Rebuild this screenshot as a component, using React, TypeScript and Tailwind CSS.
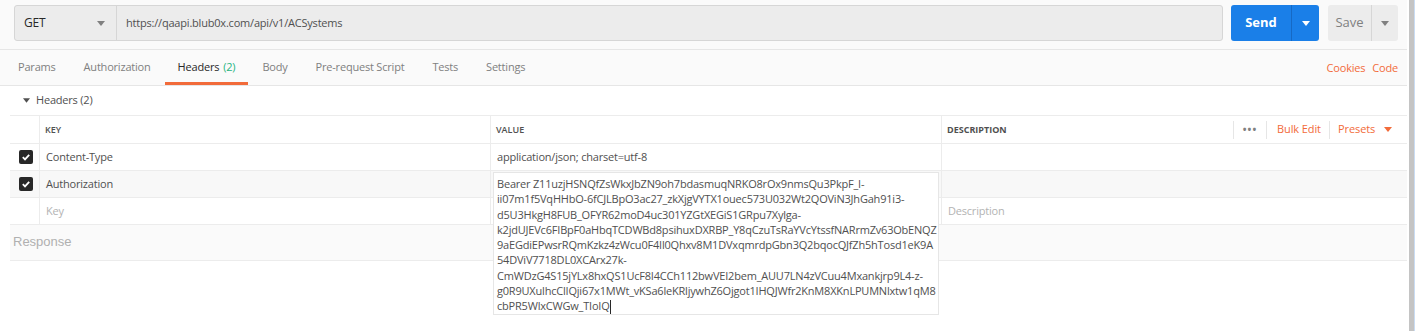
const tokenLines = [
  'Bearer Z11uzjHSNQfZsWkxJbZN9oh7bdasmuqNRKO8rOx9nmsQu3PkpF_I-',
  'ii07m1f5VqHHbO-6fCJLBpO3ac27_zkXjgVYTX1ouec573U032Wt2QOViN3JhGah91i3-',
  'd5U3HkgH8FUB_OFYR62moD4uc301YZGtXEGiS1GRpu7Xylga-',
  'k2jdUJEVc6FIBpF0aHbqTCDWBd8psihuxDXRBP_Y8qCzuTsRaYVcYtssfNARrmZv63ObENQZ',
  '9aEGdiEPwsrRQmKzkz4zWcu0F4Il0Qhxv8M1DVxqmrdpGbn3Q2bqocQJfZh5hTosd1eK9A',
  '54DViV7718DL0XCArx27k-',
  'CmWDzG4S15jYLx8hxQS1UcF8I4CCh112bwVEI2bem_AUU7LN4zVCuu4Mxankjrp9L4-z-',
  'g0R9UXulhcClIQji67x1MWt_vKSa6leKRljywhZ6Ojgot1IHQJWfr2KnM8XKnLPUMNlxtw1qM8',
  'cbPR5WlxCWGw_TIoIQ',
]

const tabs = ['Params', 'Authorization', 'Headers', 'Body', 'Pre-request Script', 'Tests', 'Settings']

function Caret({ className }: { className: string }) {
  return (
    <svg width="8" height="5" viewBox="0 0 8 5" className={className}>
      <path d="M0 0h8L4 5z" fill="currentColor" />
    </svg>
  )
}

function Checkbox() {
  return (
    <div className="w-[14px] h-[14px] rounded-[2px] bg-[#282828] flex items-center justify-center">
      <svg width="10" height="10" viewBox="0 0 10 10">
        <path d="M1.8 5.2l2.2 2.2 4.2-4.6" stroke="white" strokeWidth="1.8" fill="none" />
      </svg>
    </div>
  )
}

export default function App() {
  return (
    <div className="flex w-[1419px] h-[331px] overflow-hidden bg-white font-['Open_Sans',sans-serif] text-[11px] tracking-[-0.2px] text-[#505050]">
      <div className="w-[1407px] flex flex-col">
        {/* Request bar */}
        <div className="bg-[#fafafa] h-[50px] border-b border-[#e6e6e6] flex items-start pt-[5px] pl-[14px]">
          <div className="flex h-[36px] w-[1209px] rounded-[3px] border border-[#d6d6d6] bg-[#ececec]">
            <div className="w-[102px] flex items-center justify-between pl-[9px] pr-[11px] border-r border-[#d6d6d6] text-[12px] text-[#282828]">
              <span>GET</span>
              <Caret className="text-[#808080]" />
            </div>
            <div className="flex items-center pl-[9px] text-[11px] text-[#505050]">
              https://qaapi.blub0x.com/api/v1/ACSystems
            </div>
          </div>
          <div className="ml-[8px] flex h-[36px] w-[88px] rounded-[3px] bg-[#1a7fe8] text-white">
            <div className="w-[61px] flex items-center justify-center font-bold text-[13px] tracking-normal border-r border-[#1669c4]">
              Send
            </div>
            <div className="flex-1 flex items-center justify-center">
              <Caret className="text-white" />
            </div>
          </div>
          <div className="ml-[9px] flex h-[36px] w-[70px] rounded-[3px] bg-[#ececec] text-[#808080]">
            <div className="w-[44px] flex items-center justify-center text-[13px] tracking-normal border-r border-[#d6d6d6]">
              Save
            </div>
            <div className="flex-1 flex items-center justify-center">
              <Caret className="text-[#808080]" />
            </div>
          </div>
        </div>

        {/* Tabs */}
        <div className="bg-[#fafafa] h-[36px] border-b border-[#e6e6e6] flex items-stretch pl-[4px] pr-[9px]">
          {tabs.map((t) => (
            <div
              key={t}
              className={
                t === 'Headers'
                  ? 'px-[13px] flex items-center border-b-[3px] border-[#f26b3a] pt-[3px] text-[#282828]'
                  : 'px-[14px] flex items-center text-[#808080]'
              }
            >
              {t}
              {t === 'Headers' && <span className="ml-[4px] text-[#26b47f]">(2)</span>}
            </div>
          ))}
          <div className="ml-auto flex items-center gap-[7px] text-[#f26b3a] pt-[1px]">
            <span>Cookies</span>
            <span>Code</span>
          </div>
        </div>

        {/* Headers section */}
        <div className="pl-[10px]">
          <div className="h-[29px] flex items-center pl-[13px] gap-[6px] text-[#505050]">
            <Caret className="text-[#505050] w-[7px]" />
            <span>Headers (2)</span>
          </div>

          <div className="border-t border-[#ececec]">
            <div className="grid grid-cols-[30px_451px_451px_1fr] h-[28px] border-b border-[#ececec]">
              <div className="border-r border-[#ececec]" />
              <div className="border-r border-[#ececec] flex items-center pl-[5px] text-[9px] tracking-normal font-semibold text-[#505050]">KEY</div>
              <div className="border-r border-[#ececec] flex items-center pl-[5px] text-[9px] tracking-normal font-semibold text-[#505050]">VALUE</div>
              <div className="flex items-center pl-[5px] text-[9px] tracking-normal font-bold text-[#505050]">
                DESCRIPTION
                <div className="ml-auto flex items-center h-full">
                  <div className="h-[18px] w-[33px] border-l border-[#e6e6e6] flex items-center justify-center tracking-[1px] text-[#808080] text-[10px]">•••</div>
                  <div className="h-[18px] w-[63px] border-l border-[#e6e6e6] pl-[10px] flex items-center text-[11px] tracking-[-0.1px] font-normal text-[#f26b3a]">Bulk Edit</div>
                  <div className="h-[18px] w-[78px] border-l border-[#e6e6e6] pl-[8px] flex items-center gap-[9px] text-[11px] tracking-[-0.1px] font-normal text-[#f26b3a]">
                    Presets
                    <Caret className="text-[#f26b3a]" />
                  </div>
                </div>
              </div>
            </div>

            <div className="grid grid-cols-[30px_451px_451px_1fr] h-[27px] border-b border-[#ececec]">
              <div className="border-r border-[#ececec] flex items-center justify-center pl-[2px]"><Checkbox /></div>
              <div className="border-r border-[#ececec] flex items-center pl-[6px] text-[#505050]">Content-Type</div>
              <div className="border-r border-[#ececec] flex items-center pl-[6px] text-[#505050]">application/json; charset=utf-8</div>
              <div />
            </div>

            <div className="grid grid-cols-[30px_451px_451px_1fr] h-[27px] border-b border-[#ececec] bg-[#f8f8f8]">
              <div className="border-r border-[#ececec] flex items-center justify-center pl-[2px]"><Checkbox /></div>
              <div className="border-r border-[#ececec] flex items-center pl-[6px] text-[#505050]">Authorization</div>
              <div className="border-r border-[#ececec] relative">
                <div className="absolute left-[2px] top-[1px] z-10 w-[446px] bg-white border border-[#e6e6e6] pl-[3px] pt-[3px] leading-[15.3px] text-[#505050] whitespace-nowrap">
                  {tokenLines.map((l, i) => (
                    <div key={i}>
                      {l}
                      {i === tokenLines.length - 1 && <span className="inline-block w-[1px] h-[14px] bg-[#282828] align-middle" />}
                    </div>
                  ))}
                </div>
              </div>
              <div />
            </div>

            <div className="grid grid-cols-[30px_451px_451px_1fr] h-[27px] border-b border-[#ececec]">
              <div className="border-r border-[#ececec]" />
              <div className="border-r border-[#ececec] flex items-center pl-[6px] text-[#b3b3b3]">Key</div>
              <div className="border-r border-[#ececec]" />
              <div className="flex items-center pl-[6px] text-[#b3b3b3]">Description</div>
            </div>
          </div>

          <div className="h-[36px] bg-[#fafafa] border-b border-[#ececec] flex items-center pl-[3px] pb-[1px] font-['Liberation_Sans',sans-serif] tracking-normal text-[13px] text-[#b0b0b0]">
            Response
          </div>
        </div>
      </div>

      {/* window scrollbar edge */}
      <div className="w-[2px] bg-white" />
      <div className="w-[5px] bg-[#c4c4c4]" />
      <div className="w-[1px] bg-[#c9dcf3]" />
      <div className="flex-1 bg-white" />
    </div>
  )
}
